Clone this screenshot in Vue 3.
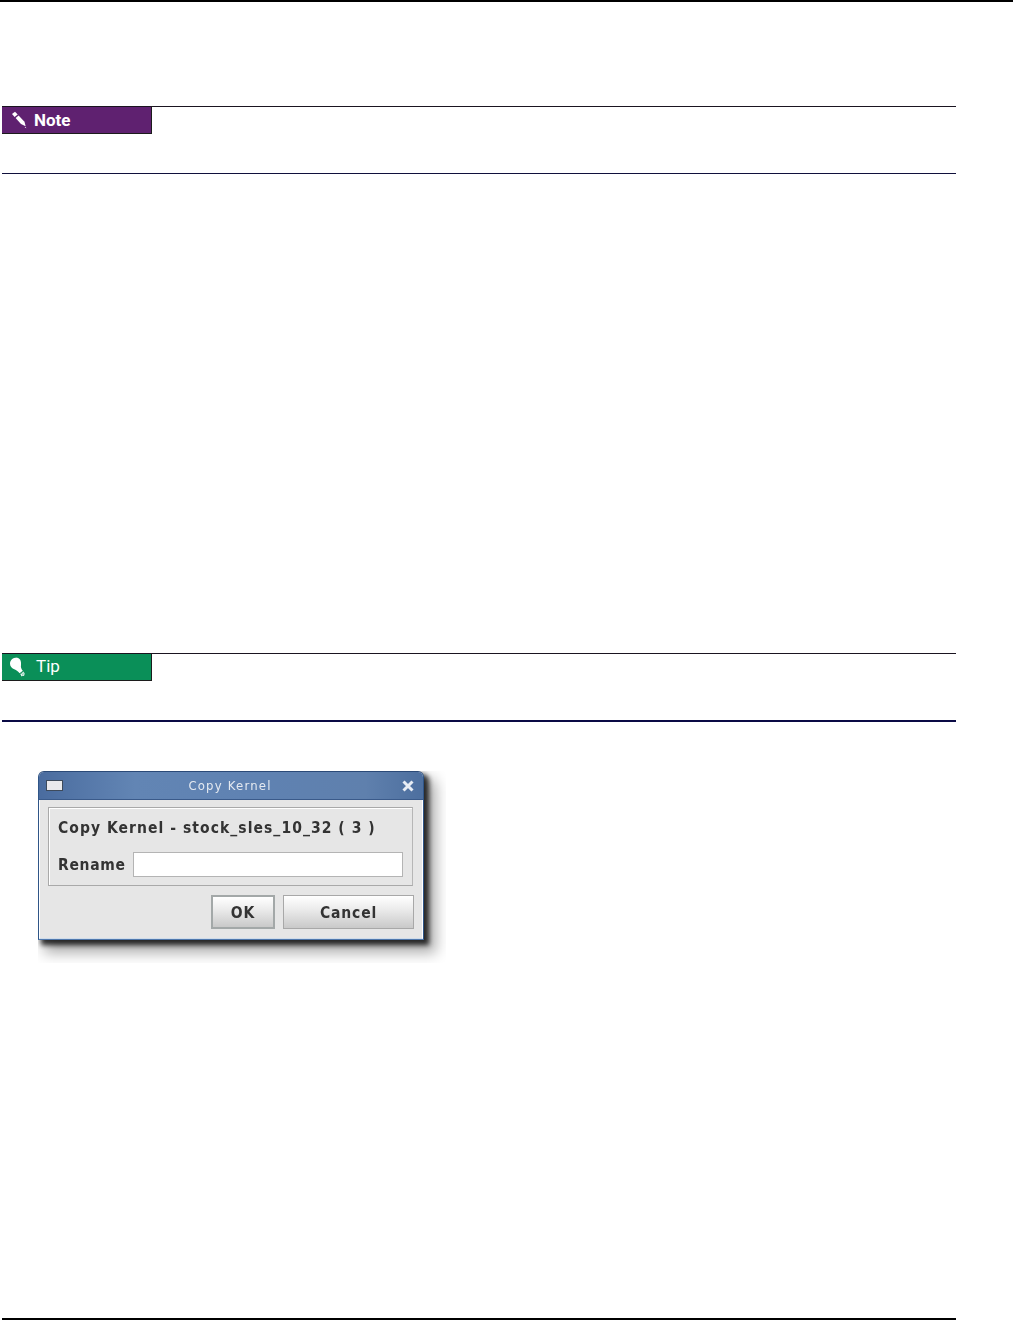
<script setup>
const admonitions = [
  { kind: "note", label: "Note" },
  { kind: "tip", label: "Tip" },
];
</script>

<template>
  <div class="page">
    <section class="admon admon-note">
      <div class="admon-label">
        <svg class="icon" viewBox="0 0 16 18" width="16" height="18" aria-hidden="true">
          <path d="M1 3 4 .8 6.700 3.400 3.600 6Z" fill="#fff" />
          <path d="M4.600 7 7.600 4.500 13.500 10.800 14.600 15.300 10 13Z" fill="#fff" />
          <path d="m14.400 15.800 1 1.400-1.700-.7Z" fill="#fff" />
        </svg>
        <span class="label-text">{{ admonitions[0].label }}</span>
      </div>
    </section>

    <section class="admon admon-tip">
      <div class="admon-label">
        <svg class="icon" viewBox="0 0 22 22" width="22" height="22" aria-hidden="true">
          <path d="M8.800 1.500C4.900 1.500 2 4.300 2 7.700c0 2.900 2.200 4.700 4.300 5.500 2.200.9 3.900 2.200 5.300 4.100l3.200-2.600c-1.500-1.600-2.200-3.400-1.800-5.700.5-3.700-.9-7.500-5-7.500Z" fill="#fff" />
          <path d="m12.300 18 3-2.500 1.500 2-.6.600.4.900-1.300 1.100-.7-.4-.9.700Z" fill="#fff" />
          <path d="m13 18.100 2.500-2M14 19.200l2.300-1.900" stroke="#0a8f58" stroke-width=".6" fill="none" />
        </svg>
        <span class="label-text">{{ admonitions[1].label }}</span>
      </div>
    </section>

    <div class="shot">
      <div class="window">
        <header class="titlebar">
          <span class="win-menu"></span>
          <span class="win-title">Copy Kernel</span>
          <svg class="win-close" viewBox="0 0 14 14" width="14" height="14" aria-hidden="true">
            <path d="M2.500 2.500l9 9M11.500 2.500l-9 9" stroke="#e8edf4" stroke-width="3" fill="none" />
          </svg>
        </header>
        <div class="win-body">
          <div class="group">
            <div class="group-title">Copy Kernel - stock_sles_10_32 ( 3 )</div>
            <div class="field">
              <label class="field-label">Rename</label>
              <div class="field-input"></div>
            </div>
          </div>
          <div class="actions">
            <button class="btn btn-ok" type="button">OK</button>
            <button class="btn btn-cancel" type="button">Cancel</button>
          </div>
        </div>
      </div>
    </div>

    <div class="spacer"></div>
    <footer class="page-foot"></footer>
  </div>
</template>

<style>
html,
body {
  margin: 0;
  background: #fff;
}
</style>

<style scoped>
.page {
  width: 1013px;
  height: 1320px;
  box-sizing: border-box;
  border-top: 2px solid #000;
  display: flex;
  flex-direction: column;
  overflow: hidden;
  background: #fff;
}

.admon {
  width: 954px;
  margin-left: 2px;
  height: 68px;
  box-sizing: border-box;
  border-top: 1px solid #1a1420;
  border-bottom: 1px solid #10103c;
}

.admon-note {
  margin-top: 104px;
}

.admon-tip {
  margin-top: 479px;
  border-bottom: 2px solid #0a0a45;
  height: 69px;
}

.admon-label {
  width: 150px;
  height: 27px;
  box-sizing: border-box;
  display: flex;
  align-items: center;
  color: #fff;
  font-family: "Roboto", "Open Sans", "Liberation Sans", sans-serif;
  border-right: 1px solid #1c1c1c;
  border-bottom: 1px solid #1c1c1c;
}

.admon-note .admon-label {
  background: #5f2170;
  padding-left: 9px;
  gap: 7px;
  font-size: 17px;
  font-weight: 700;
}

.admon-note .label-text {
  margin-top: 0;
}

.admon-tip .admon-label {
  background: #0a8f58;
  padding-left: 6px;
  gap: 6px;
  font-size: 17px;
  font-weight: 400;
}

.icon {
  flex: none;
}

.label-text {
  line-height: 1;
  margin-top: -2px;
}

.shot {
  margin: 49px 0 0 38px;
  width: 408px;
  height: 192px;
  overflow: hidden;
  flex: none;
}

.window {
  width: 386px;
  height: 169px;
  box-sizing: border-box;
  border-radius: 6px 6px 0 0;
  background: #e6e6e6;
  border: 1px solid #2f5587;
  border-top-color: #2b4a78;
  border-bottom-color: #4f78ad;
  box-shadow: 4px 4px 5px 1px rgba(0, 0, 0, 0.78), 9px 10px 14px 3px rgba(0, 0, 0, 0.32);
  display: flex;
  flex-direction: column;
  font-family: "DejaVu Sans", "Liberation Sans", sans-serif;
  font-stretch: condensed;
  filter: blur(0.35px);
}

.titlebar {
  height: 27px;
  flex: none;
  display: flex;
  align-items: center;
  background: linear-gradient(90deg, #4a6c9f 0%, #6285b4 25%, #5f82b2 55%, #5f80ad 85%, #4d6f9f 100%);
  border-bottom: 1px solid #3a5a8a;
  border-radius: 5px 5px 0 0;
}

.win-menu {
  width: 17px;
  height: 11px;
  margin-left: 7px;
  background: #e9e9ec;
  border: 1px solid #3d4a5c;
  box-sizing: border-box;
}

.win-title {
  flex: 1;
  text-align: center;
  color: #e4e9f0;
  font-size: 13px;
  letter-spacing: 1.200px;
  padding-right: 4px;
  margin-top: -1px;
}

.win-close {
  margin-right: 8px;
}

.win-body {
  flex: 1;
  display: flex;
  flex-direction: column;
  padding: 7px 9px 9px 8px;
  border-left: 1px solid #fff;
  border-right: 1px solid #fff;
  border-bottom: 1px solid #d0dcea;
  min-height: 0;
}

.group {
  height: 80px;
  box-sizing: border-box;
  border: 1px solid #a9a9a9;
  border-right-color: #b6b6b6;
  box-shadow: inset 1px 1px 0 #fff;
  padding: 11px 9px 0 9px;
}

.group-title {
  color: #333;
  font-size: 15.500px;
  font-weight: 700;
  letter-spacing: 1.050px;
  line-height: 18px;
  white-space: nowrap;
}

.field {
  display: flex;
  align-items: center;
  gap: 8px;
  margin-top: 15px;
}

.field-label {
  width: 67px;
  color: #333;
  font-size: 15.500px;
  font-weight: 700;
  letter-spacing: 0.7px;
  white-space: nowrap;
}

.field-input {
  width: 270px;
  height: 25px;
  box-sizing: border-box;
  background: #fff;
  border: 1px solid #b4b4b4;
}

.actions {
  display: flex;
  justify-content: flex-end;
  gap: 8px;
  margin-top: 9px;
  margin-right: -1px;
}

.btn {
  height: 34px;
  box-sizing: border-box;
  padding: 1px 0 0;
  font-family: "DejaVu Sans", "Liberation Sans", sans-serif;
  font-stretch: condensed;
  font-size: 15.500px;
  font-weight: 700;
  letter-spacing: 0.85px;
  color: #333;
  background: linear-gradient(180deg, #fff 0%, #ececec 40%, #c9c9c9 100%);
  border: 1px solid #a8a8a8;
}

.btn-ok {
  width: 64px;
  border: 2px solid #a3a8a8;
}

.btn-cancel {
  width: 131px;
}

.spacer {
  flex: 1;
}

.page-foot {
  height: 2px;
  width: 954px;
  margin-left: 2px;
  background: #000;
  flex: none;
}
</style>
